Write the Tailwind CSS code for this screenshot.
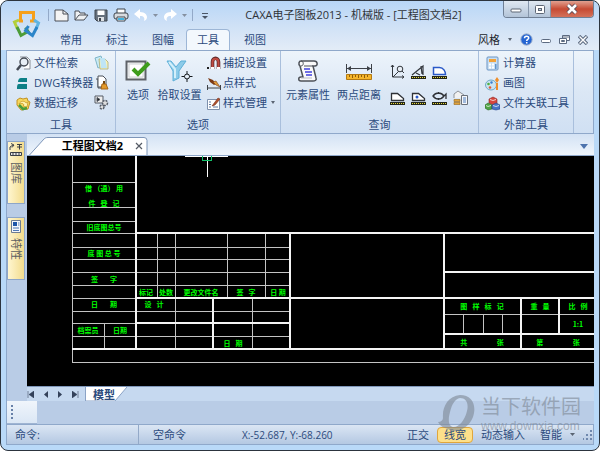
<!DOCTYPE html>
<html lang="zh-CN">
<head>
    <meta charset="UTF-8">
    <meta name="viewport" content="width=device-width, initial-scale=1.0">
    <title>CAXA电子图板2013 - 机械版</title>
    <script src="https://cdn.jsdelivr.net/npm/@tailwindcss/browser@4"></script>
</head>
<body class="bg-white font-['Open_Sans','Noto_Sans_CJK_SC',sans-serif] text-[11px] leading-4 text-[#2b4a7c]">
    <div class="relative h-screen flex flex-col overflow-hidden rounded-lg border border-[#2c343e] bg-[#b9d9f8] px-[5px] pb-[5px]">

        <!-- Title bar and tabs -->
        <header class="-mx-[5px] flex rounded-t-lg bg-linear-to-b from-[#b8d6f7] via-[#cfe1f6] to-[#e3ecf7] pl-[5px] pr-[5px]">
            <div class="w-[42px] pt-[9px] pl-[6px]">
                <svg class="h-[28px] w-[29px]" viewBox="0 0 29 28" fill="none" stroke-width="3">
                    <path d="M11 11H8.500V2.500h13V11H18" stroke="#f6a01c"/>
                    <path d="M7 10l-4.500 2 3 7" stroke="#b3cf3a"/>
                    <path d="M5 17l4 8.500 7-4-2.500-4" stroke="#4c9c38"/>
                    <path d="M22 10l4.500 3-2.500 6" stroke="#5fb4e2"/>
                    <path d="M25 17l-4.500 8.500-7-5 3-4.500" stroke="#2c85c9"/>
                </svg>
            </div>
            <div class="flex-1">
                <div class="flex h-7 items-start">
                    <div class="flex items-center gap-[5px] pt-[6px]">
                        <span class="h-3 w-px bg-[#93a9c8]"></span>
                        <button aria-label="新建"><svg class="h-4 w-[15px]" viewBox="0 0 15 16"><path d="M1 3h8l5 4v7H1z" fill="#f4f4f4" stroke="#4a4f57"/><path d="M9 3v4h5" fill="none" stroke="#4a4f57"/></svg></button>
                        <button aria-label="打开"><svg class="h-4 w-[15px]" viewBox="0 0 15 16" fill="#eef0f2" stroke="#4a4f57"><path d="M1 13V4h4l1 2h5v2"/><path d="M1 13l4-5h9l-4 5z"/></svg></button>
                        <button aria-label="保存"><svg class="h-4 w-[14px]" viewBox="0 0 14 16"><path d="M1 3h12v11H3l-2-2z" fill="#66707c" stroke="#3d444d"/><path d="M3.500 3.500h7V8h-7z" fill="#fff"/><path d="M4 10h6v4H4z" fill="#dde1e5"/><path d="M5 11h2v3H5z" fill="#3d444d"/></svg></button>
                        <button aria-label="打印"><svg class="h-4 w-4" viewBox="0 0 16 16"><path d="M4 2h8v5H4z" fill="#fff" stroke="#3d444d"/><rect x="1" y="6" width="14" height="6" rx="2" fill="#d8dbdf" stroke="#3d444d"/><path d="M4 10h8v4H4z" fill="#fff" stroke="#3d444d"/><path d="M5 11h6v2H5z" fill="#42b4e0"/></svg></button>
                        <button aria-label="撤销"><svg class="h-4 w-[14px]" viewBox="0 0 14 16"><path d="M0 7l6-5v3c5 0 7 3 7 5s-1 3-3 4c1-3 0-5-4-5v3z" fill="#fff"/></svg></button>
                        <button aria-label="撤销列表"><svg class="h-4 w-[5px]" viewBox="0 0 5 16"><path d="M0 7h5l-2.500 3z" fill="#8590a0"/></svg></button>
                        <button aria-label="重做"><svg class="h-4 w-[14px]" viewBox="0 0 14 16"><path d="M14 7L8 2v3C3 5 1 8 1 10s1 3 3 4c-1-3 0-5 4-5v3z" fill="#fff"/></svg></button>
                        <button aria-label="重做列表"><svg class="h-4 w-[5px]" viewBox="0 0 5 16"><path d="M0 7h5l-2.500 3z" fill="#8590a0"/></svg></button>
                        <span class="h-3 w-px bg-[#93a9c8]"></span>
                        <button class="pl-1" aria-label="自定义快速访问工具栏"><svg class="h-4 w-[6px]" viewBox="0 0 6 16"><path d="M0 6.500h6" stroke="#4a5566"/><path d="M0 9h6l-3 3z" fill="#4a5566"/></svg></button>
                    </div>
                    <h1 class="flex-1 whitespace-nowrap pt-[6px] pr-1 text-center text-[#2f3338]">CAXA电子图板2013 - 机械版 - [工程图文档2]</h1>
                    <div class="flex h-[17px] overflow-hidden rounded-b border border-t-0 border-[#6f7f94]">
                        <button class="flex w-[25px] items-center justify-center border-r border-[#8797ac] bg-linear-to-b from-[#dfe8f2] to-[#b3c4d8]" aria-label="最小化"><svg class="h-3 w-3" viewBox="0 0 12 12"><rect x="1" y="6" width="10" height="3" rx="1" fill="#fff" stroke="#5c6675"/></svg></button>
                        <button class="flex w-[22px] items-center justify-center border-r border-[#8797ac] bg-linear-to-b from-[#dfe8f2] to-[#b3c4d8]" aria-label="最大化"><svg class="h-3 w-3" viewBox="0 0 12 12"><rect x="1.500" y="2.500" width="9" height="8" rx="1" fill="#fff" stroke="#5c6675"/><rect x="4.500" y="5.500" width="3" height="2" fill="#c3d0df" stroke="#5c6675"/></svg></button>
                        <button class="flex w-[42px] items-center justify-center bg-linear-to-b from-[#e0a090] via-[#c64a33] to-[#d4715a]" aria-label="关闭"><svg class="h-3 w-3" viewBox="0 0 12 12"><path d="M2 2l8 8M10 2l-8 8" stroke="#5c4a55" stroke-width="4.500"/><path d="M2 2l8 8M10 2l-8 8" stroke="#fff" stroke-width="2.600"/></svg></button>
                    </div>
                </div>
                <div class="flex h-[21px] items-center">
                    <nav class="flex h-full">
                        <button class="w-[46px]">常用</button>
                        <button class="w-[46px]">标注</button>
                        <button class="w-[46px]">图幅</button>
                        <button class="w-[44px] rounded-t border border-b-0 border-[#9db6d6] bg-[#f3f8fd]">工具</button>
                        <button class="w-[50px]">视图</button>
                    </nav>
                    <div class="ml-auto flex items-center gap-2 pr-[6px]">
                        <button class="flex items-center gap-2 text-[#22262c]">风格<svg class="h-1 w-1" viewBox="0 0 4 4"><path d="M0 0h4L2 3z" fill="#5a6472"/></svg></button>
                        <button aria-label="帮助"><svg class="h-[13px] w-[13px]" viewBox="0 0 13 13"><circle cx="6.500" cy="6.500" r="5.700" fill="#2565d2" stroke="#a9b8cf"/><path d="M4.500 5.200c0-2.800 4.200-2.600 4.200-.3 0 1.500-2 1.500-2 3M6.700 9v1.500" stroke="#fff" stroke-width="1.500" fill="none"/></svg></button>
                        <button aria-label="最小化文档"><svg class="h-[10px] w-[10px]" viewBox="0 0 10 10"><rect x=".5" y="4.500" width="9" height="3" rx="1" fill="#fff" stroke="#5c6a80"/></svg></button>
                        <button aria-label="还原文档"><svg class="h-[11px] w-[11px]" viewBox="0 0 11 11" fill="#fff" stroke="#5c6a80"><path d="M3.500 1.500h7v5h-7z"/><path d="M3.500 3h7"/><path d="M.5 4.500h7v5h-7z"/><path d="M2.500 6.500h3v1h-3z"/></svg></button>
                        <button aria-label="关闭文档"><svg class="h-[10px] w-[10px]" viewBox="0 0 10 10"><path d="M1 1l8 8M9 1L1 9" stroke="#5c6a80" stroke-width="3.400"/><path d="M1.500 1.500l7 7M8.500 1.500l-7 7" stroke="#fff" stroke-width="1.400"/></svg></button>
                    </div>
                </div>
            </div>
        </header>

        <!-- Ribbon -->
        <div class="flex h-[84px] border border-[#8fa8ca] bg-linear-to-b from-[#edf4fb] via-[#dbe7f5] to-[#d0e0f3]">
            <section class="flex w-[109px] flex-col justify-between border-r border-[#a9bfdc] pt-1">
                <div class="flex justify-between pl-[9px] pr-[6px]">
                    <div class="flex flex-col gap-1">
                        <button class="flex items-center gap-[3px] whitespace-nowrap"><svg class="h-[15px] w-[15px]" viewBox="0 0 15 15"><path d="M4 1h7l3 3v9H8" fill="#fff" stroke="#8a8f98"/><circle cx="8" cy="6" r="4" fill="#e8eef5" stroke="#444a54" stroke-width="1.400"/><path d="M5 9l-4 5" stroke="#444a54" stroke-width="2.500"/></svg>文件检索</button>
                        <button class="flex items-center gap-[3px] whitespace-nowrap"><svg class="h-[15px] w-[15px]" viewBox="0 0 15 15" fill="#0d7f86"><path d="M5 2h6v4H2c0-2 1-4 3-4zM3 8h8v5H1c0-3 0-5 2-5z"/></svg>DWG转换器</button>
                        <button class="flex items-center gap-[3px] whitespace-nowrap"><svg class="h-[15px] w-[15px]" viewBox="0 0 15 15"><path d="M1 4l3-2 3 1 4-1 1 3 2 1-2 7-7 1-4-5z" fill="#f7d75c" stroke="#c39222"/><path d="M3 8c2-4 6-3 7-1l2-1-1 5-4-1 1-1c-1-2-2-2-5-1z" fill="#fff3b0" stroke="#c39222" stroke-width=".7"/><path d="M3 9l4 4 4-1" fill="none" stroke="#4b9d3a" stroke-width="2.500"/></svg>数据迁移</button>
                    </div>
                    <div class="flex flex-col items-center gap-[5px]">
                        <button aria-label="文档"><svg class="h-[15px] w-[15px]" viewBox="0 0 15 15"><path d="M1 3l6-2 3 9-6 3z" fill="#c9ebf5" stroke="#7fb5c9"/><path d="M5 4h6l3 3v7H6z" fill="#fbf3b5" stroke="#b5b98b"/><path d="M6 3h5l2 10H7z" fill="#bfe5f5"/></svg></button>
                        <button aria-label="清理"><svg class="h-[15px] w-[15px]" viewBox="0 0 15 15"><path d="M2 4h2v9h5" fill="none" stroke="#4b5059"/><path d="M4 1h5l3 3v8H4z" fill="#fff" stroke="#4b5059"/><path d="M10 6v3" stroke="#70450f" stroke-width="2"/><path d="M8 9h4l2 5H7z" fill="#e39a2b" stroke="#a7671a"/></svg></button>
                        <button aria-label="批处理"><svg class="h-[15px] w-[15px]" viewBox="0 0 15 15" fill="none" stroke="#555b65"><path d="M1 1h8v7H1z" fill="#eee"/><path d="M3 2.500l3 2-3 2z" fill="#222"/><circle cx="11" cy="8" r="2.500" fill="#ddd" stroke-dasharray="2 1" stroke-width="1.500"/><circle cx="8" cy="12" r="2" fill="#ddd" stroke-dasharray="2 1" stroke-width="1.500"/></svg></button>
                    </div>
                </div>
                <h2 class="text-center">工具</h2>
            </section>

            <section class="flex w-[165px] flex-col justify-between border-r border-[#a9bfdc] pt-1">
                <div class="flex pl-[7px]">
                    <button class="flex w-[30px] flex-col items-center gap-1 pt-1"><svg class="h-6 w-[26px]" viewBox="0 0 26 24"><path d="M1.500 2.500h19v18h-19z" fill="#f2f3f3" stroke="#5e6268" stroke-width="2"/><path d="M4 5h14v13H4z" fill="#fff" stroke="#d0d3d6"/><path d="M8 10l5 5L24 4" fill="none" stroke="#3f9d1c" stroke-width="4"/></svg>选项</button>
                    <button class="flex w-[53px] flex-col items-center gap-1 pt-1 whitespace-nowrap"><svg class="h-6 w-7" viewBox="0 0 28 24"><path d="M1 2h4l5 6 5-6h5l-7 10v7l-6 3V12z" fill="#8ccbe9" stroke="#5fb0d8"/><path d="M3 3l6 7v9" fill="none" stroke="#d3effa" stroke-width="2"/><path d="M21 12v11M15.500 17.500h11" stroke="#15181c"/><circle cx="21" cy="17.500" r="2.500" fill="#e4edf7" stroke="#15181c"/></svg>拾取设置</button>
                    <div class="flex flex-col gap-1 pl-[1px]">
                        <button class="flex items-center gap-[2px] whitespace-nowrap"><svg class="h-[15px] w-[14px]" viewBox="0 0 14 15"><path d="M5.500 13V6c0-5 6-5 6 0v7" fill="none" stroke="#5d2b2b" stroke-width="3.600"/><path d="M5.500 12V6c0-4.500 6-4.500 6 0v6" fill="none" stroke="#c04b42" stroke-width="2"/><path d="M4 11h3v2H4zM10 11h3v2h-3z" fill="#fff"/><path d="M0 11h2v2H0z" fill="#222"/></svg>捕捉设置</button>
                        <button class="flex items-center gap-[2px] whitespace-nowrap"><svg class="h-[15px] w-[14px]" viewBox="0 0 14 15"><path d="M.5 9v5M13.500 9v5M1 12h12" stroke="#3e4248"/><path d="M1 2l5 2 3 4-2 1-4-3z" fill="#7b3a16"/><path d="M6 6l3-1 4 6-4-2z" fill="#e09a3a" stroke="#7b3a16" stroke-width=".6"/></svg>点样式</button>
                        <button class="flex items-center gap-[2px] whitespace-nowrap"><svg class="h-[15px] w-[14px]" viewBox="0 0 14 15"><path d="M.5 3.500h12v10H.5z" fill="#fff" stroke="#7e90ac"/><path d="M2 6h2M2 8.500h2M2 11h2M6 11h5" stroke="#5f78a0"/><path d="M5 10l6-8 2 1-5 6z" fill="#b3502c" stroke="#70301c" stroke-width=".6"/></svg>样式管理<svg class="ml-[2px] h-1 w-1" viewBox="0 0 4 4"><path d="M0 0h4L2 3z" fill="#5a6472"/></svg></button>
                    </div>
                </div>
                <h2 class="text-center">选项</h2>
            </section>

            <section class="flex w-[198px] flex-col justify-between border-r border-[#a9bfdc] pt-1">
                <div class="flex pl-[2px]">
                    <button class="flex w-[50px] flex-col items-center gap-1 pt-1 whitespace-nowrap"><svg class="h-6 w-6" viewBox="0 0 24 24"><path d="M5 2h13c4 0 4 5 1 5h-2l3 12c1 2-1 3-3 3H5c-3 0-3-4 0-4h2L4 7C2 5 3 2 5 2z" fill="#fafafa" stroke="#4d5158" stroke-width="1.500"/><path d="M5 2c3 0 3 5 0 5M17 7H8" fill="none" stroke="#4d5158"/><path d="M8 10h6M9 13h7M10 16h6" stroke="#4343dd" stroke-width="1.300"/><path d="M5 19h11" stroke="#b9bdc4"/></svg>元素属性</button>
                    <button class="flex w-[52px] flex-col items-center gap-1 pt-1 whitespace-nowrap"><svg class="h-6 w-7" viewBox="0 0 28 24"><path d="M1.500 5v9M26.500 5v9M2 9.500h24" stroke="#3d4147"/><path d="M6 7L2 9.500 6 12zM22 7l4 2.500-4 2.500z" fill="#3d4147"/><path d="M1.500 15.500h25v5h-25z" fill="#f5b52b" stroke="#b47a12"/><path d="M4.500 16v2M7.500 16v3M10.500 16v2M13.500 16v3M16.500 16v2M19.500 16v3M22.500 16v2" stroke="#8f5c08"/></svg>两点距离</button>
                    <div class="grid grid-cols-4 content-start gap-x-[6px] gap-y-[10px] pt-[9px] pl-[5px]">
                        <button aria-label="坐标点"><svg class="h-4 w-[15px]" viewBox="0 0 15 16" fill="none" stroke="#33373d"><path d="M2.500 1v12H14M1 3l1.500-2L4 3M12 11.500l2 1.500-2 1.500M3 13l6-6"/><circle cx="10" cy="5" r="2.800" fill="#e8eef5"/><path d="M12 7l2 2"/></svg></button>
                        <button aria-label="角度"><svg class="h-4 w-[15px]" viewBox="0 0 15 16"><path d="M1 11L12 2v9M5 9l4 2M10 2l1 8" fill="none" stroke="#33373d" stroke-width="1.200"/><path d="M0 12h15v3H0z" fill="#24261a"/><path d="M1 13.500h13" stroke="#e8dc3c" stroke-dasharray="1 1"/></svg></button>
                        <button aria-label="周长"><svg class="h-4 w-[15px]" viewBox="0 0 15 16"><path d="M1.500 3.500h6c4 0 6 4 6 7h-12z" fill="#fff" stroke="#2a59c8" stroke-width="1.500"/><path d="M0 12h15v3H0z" fill="#24261a"/><path d="M1 13.500h13" stroke="#e8dc3c" stroke-dasharray="1 1"/></svg></button>
                        <span></span>
                        <button aria-label="面积"><svg class="h-4 w-[15px]" viewBox="0 0 15 16"><path d="M1.500 3.500h6l6 5v2h-12z" fill="#fff" stroke="#2e3136" stroke-width="1.300"/><path d="M0 12h15v3H0z" fill="#24261a"/><path d="M1 13.500h13" stroke="#e8dc3c" stroke-dasharray="1 1"/></svg></button>
                        <button aria-label="重心"><svg class="h-4 w-[15px]" viewBox="0 0 15 16"><path d="M1.500 3.500h6l6 5v2h-12z" fill="#fff" stroke="#2e3136" stroke-width="1.300"/><circle cx="6" cy="7" r="1.500" fill="#2a59c8"/><path d="M0 12h15v3H0z" fill="#24261a"/><path d="M1 13.500h13" stroke="#e8dc3c" stroke-dasharray="1 1"/></svg></button>
                        <button aria-label="惯性矩"><svg class="h-4 w-[15px]" viewBox="0 0 15 16"><path d="M1 6c3-4 8-4 11 0-3 4-8 4-11 0zM6.500 2v2M6.500 8v2M11 7l3-3v5" fill="none" stroke="#2e3136" stroke-width="1.300"/><path d="M0 12h15v3H0z" fill="#24261a"/><path d="M1 13.500h13" stroke="#e8dc3c" stroke-dasharray="1 1"/></svg></button>
                        <button aria-label="重量"><svg class="h-4 w-[15px]" viewBox="0 0 15 16"><path d="M1 8V4l4-3 6 4v3" fill="#f1f1f1" stroke="#8d9299"/><path d="M1 9.500h6v2H1zM1 12.500h6v2H1z" fill="#e2a33b" stroke="#976516" stroke-width=".6"/><path d="M8.500 5.500h6v9h-6z" fill="#f5f7fa" stroke="#6a707a"/><path d="M10 8h3M10 10h3M10 12h3" stroke="#4f7fc0"/></svg></button>
                    </div>
                </div>
                <h2 class="text-center">查询</h2>
            </section>

            <section class="flex w-[95px] flex-col justify-between border-r border-[#a9bfdc] pt-1">
                <div class="flex flex-col items-start gap-1 pl-[6px]">
                    <button class="flex items-center gap-[3px] whitespace-nowrap"><svg class="h-[15px] w-[15px]" viewBox="0 0 15 15"><rect x="2" y="1" width="11" height="13" rx="1" fill="#c9def2" stroke="#6b95c4"/><path d="M4 3h7v3H4z" fill="#f2a33a"/><path d="M4 8.500h2M7 8.500h2M4 11.500h2M7 11.500h2" stroke="#fff" stroke-width="2"/><path d="M10 8h1.500v5H10z" fill="#5d93cf"/></svg>计算器</button>
                    <button class="flex items-center gap-[3px] whitespace-nowrap"><svg class="h-[15px] w-[15px]" viewBox="0 0 15 15"><ellipse cx="6" cy="9" rx="5.500" ry="5" fill="#cbe4f2" stroke="#6fa9c8"/><circle cx="3.500" cy="8" r="1.300" fill="#4caf3e"/><circle cx="6.500" cy="6.500" r="1.200" fill="#3b7fd0"/><circle cx="5" cy="11.500" r="1.300" fill="#e05b3a"/><path d="M12 1l2 3-2 3-2-3zM11 7h2v7h-2z" fill="#ef8e2a"/></svg>画图</button>
                    <button class="flex items-center gap-[3px] whitespace-nowrap"><svg class="h-[15px] w-[15px]" viewBox="0 0 15 15"><path d="M4 3l4-2 4 2v5L8 9 4 7z" fill="#d6453c" stroke="#8c2622" stroke-width=".6"/><path d="M0 9l3-2 4 2v4l-4 1-3-2z" fill="#4ea345" stroke="#286326" stroke-width=".6"/><path d="M7 9l4-2 4 2v4l-4 1-4-1z" fill="#4774c6" stroke="#24448a" stroke-width=".6"/><path d="M5 3.500l3 1 3-1M1 9.500l2 1 3-1M8 9.500l3 1 3-1" fill="none" stroke="#fff" stroke-opacity=".7"/></svg>文件关联工具</button>
                </div>
                <h2 class="text-center">外部工具</h2>
            </section>
        </div>

        <!-- Drawing area -->
        <div class="flex min-h-0 flex-1 bg-[#b9cce6]">
            <aside class="flex w-[21px] flex-col gap-[13px] border-l border-[#8fa8ca] pt-[7px] pr-[2px]">
                <button class="flex h-[63px] flex-col items-center gap-[5px] border border-[#8ea6c8] bg-linear-to-r from-[#fff6d0] to-[#f3dc8c] pt-[1px] text-[#5d5f63]">
                    <svg class="h-[14px] w-[14px] shrink-0" viewBox="0 0 14 14" fill="none" stroke="#3a3f47"><path d="M1 7V4l3-2M2 .5L5 2 3 4.500M8 1.500h5M10.500 1.500v5M8 4h5"/><path d="M1.500 9.500h11v3h-11z" fill="#e8e8e8"/><path d="M4 9v3M7 9v3M10 9v3"/></svg>
                    <span class="[writing-mode:vertical-rl] [text-orientation:sideways]">图库</span>
                </button>
                <button class="flex h-[63px] flex-col items-center gap-[5px] border border-[#8ea6c8] bg-linear-to-r from-[#fff6d0] to-[#f3dc8c] pt-[1px] text-[#5d5f63]">
                    <svg class="h-[14px] w-[14px] shrink-0" viewBox="0 0 14 14"><path d="M2.500 1.500h9v12h-9z" fill="#f5f7fa" stroke="#6d7c93"/><path d="M4 3h4v4H4z" fill="#1f56a8"/><path d="M9 4h1.500M9 6h1.500M4 9h6M4 11.500h6" stroke="#4f79b5"/></svg>
                    <span class="[writing-mode:vertical-rl] [text-orientation:sideways]">特性</span>
                </button>
            </aside>
            <div class="flex min-w-0 flex-1 flex-col">
                <div class="flex h-[22px] items-end border-b border-[#8fa8ca] bg-linear-to-b from-[#d3e2f4] to-[#eff5fc] pl-[2px]">
                    <div class="relative flex h-[18px] w-[119px] items-center justify-end gap-3 pr-[5px]">
                        <svg class="absolute inset-0 h-full w-full" viewBox="0 0 119 18"><path d="M.5 18L15 2c1-1 2-1.500 4-1.500h96q3 0 3 3V18" fill="#fff" stroke="#7d95b8"/></svg>
                        <span class="relative font-bold text-black">工程图文档2</span>
                        <button class="relative" aria-label="关闭标签"><svg class="h-2 w-2" viewBox="0 0 8 8"><path d="M1 1l6 6M7 1L1 7" stroke="#555b65" stroke-width="1.200"/></svg></button>
                    </div>
                    <button class="mr-[6px] mb-[6px] ml-auto" aria-label="文档列表"><svg class="h-[5px] w-2" viewBox="0 0 8 5"><path d="M0 0h8L4 5z" fill="#4d73ad"/></svg></button>
                </div>
                <div class="min-h-0 flex-1 bg-black">
                    <svg class="h-full w-full font-['Noto_Sans_CJK_SC',sans-serif] text-[7px]" stroke="#c4c4c4" fill="none" shape-rendering="crispEdges">
                        <!-- side column -->
                        <path d="M45.500 0V206.500H600M77.500 167V193M45 26.500H109M45 51.500H109M45 65.500H109M45 77.500H109M45 91.500H109M45 103.500H109M45 116.500H109M45 129.500H109M45 142.500H109M45 155.500H109M45 167.500H109M45 180.500H109"/>
                        <!-- change table -->
                        <path d="M130.500 77V142M148.500 77V193M200.500 77V142M238.500 77V142M225.500 142V193M109 91.500H263M109 103.500H263M109 116.500H263M109 129.500H263M109 155.500H263M109 180.500H263"/>
                        <!-- title block -->
                        <path d="M436.500 158V178M456.500 158V178M475.500 158V178M417 158.500H600"/>
                        <path d="M109 0V193M109 77H600M263 77V193M186 142V193M45 193H600M109 142H600M109 167H263M417 77V193M417 116H600M417 178H600M494 142V193M532 142V178" stroke="#f4f4f4" stroke-width="2"/>
                        <!-- crosshair -->
                        <path d="M158 .5H201M180.500 0V21" stroke="#fff"/>
                        <path d="M175.500 0V4.500H184.500V0" stroke="#14c26a"/>
                        <g fill="#00ff00" stroke="none" text-anchor="middle" shape-rendering="auto" class="font-bold">
                            <text x="77" y="35">借 （通） 用</text>
                            <text x="77" y="50">件 &#8194;登 &#8194;记</text>
                            <text x="77" y="74">旧底图总号</text>
                            <text x="77" y="100">底 图 总 号</text>
                            <text x="77" y="126">签 &#8195;&#8194;字</text>
                            <text x="77" y="151">日 &#8195;&#8194;期</text>
                            <text x="61" y="177">档案员</text>
                            <text x="93" y="177">日期</text>
                            <text x="119" y="139">标记</text>
                            <text x="139" y="139">处数</text>
                            <text x="174" y="139">更改文件名</text>
                            <text x="219" y="139">签 &#8194;字</text>
                            <text x="251" y="139">日 期</text>
                            <text x="127" y="151">设 &#8194;计</text>
                            <text x="206" y="190">日 &#8194;期</text>
                            <text x="455" y="153">图 &#8194;样 &#8194;标 &#8194;记</text>
                            <text x="513" y="153">重 &#8194;量</text>
                            <text x="551" y="153">比 &#8194;例</text>
                            <text x="551" y="171">1:1</text>
                            <text x="455" y="189">共 &#8195;&#8195;&#8195;&#8195;张</text>
                            <text x="531" y="189">第 &#8195;&#8195;&#8195;&#8195;张</text>
                        </g>
                    </svg>
                </div>
                <div class="flex h-[15px] items-center border-t border-[#7f97ba] bg-[#c6d9f0]">
                    <div class="flex gap-2 pr-[6px]">
                        <button aria-label="第一页"><svg class="h-[7px] w-[7px]" viewBox="0 0 7 7"><path d="M1 0v7M7 0L2 3.500 7 7z" fill="#33415a" stroke="#33415a" stroke-width=".6"/></svg></button>
                        <button aria-label="上一页"><svg class="h-[7px] w-[7px]" viewBox="0 0 7 7"><path d="M6 0L2 3.500 6 7z" fill="#33415a"/></svg></button>
                        <button aria-label="下一页"><svg class="h-[7px] w-[7px]" viewBox="0 0 7 7"><path d="M1 0l4 3.500L1 7z" fill="#33415a"/></svg></button>
                        <button aria-label="最后一页"><svg class="h-[7px] w-[7px]" viewBox="0 0 7 7"><path d="M6 0v7M0 0l5 3.500L0 7z" fill="#33415a" stroke="#33415a" stroke-width=".6"/></svg></button>
                    </div>
                    <button class="relative h-full w-[42px] pl-2 text-left font-bold">
                        <svg class="absolute inset-0 h-full w-full" viewBox="0 0 42 14" preserveAspectRatio="none"><path d="M.5 0v14H30L42 0" fill="#fff" stroke="#8ba3c6"/></svg>
                        <span class="relative">模型</span>
                    </button>
                </div>
            </div>
        </div>

        <!-- Command strip -->
        <div class="h-[23px] border-l border-[#8fa8ca] bg-[#b9cce6]">
            <div class="flex h-full w-[30px] items-center border-b border-[#9fb4d2] bg-linear-to-b from-[#f0f5fb] to-[#dbe7f5] pl-1">
                <svg class="h-[14px] w-[2px]" viewBox="0 0 2 14" fill="#6780a8"><path d="M0 0h2v2H0zM0 4h2v2H0zM0 8h2v2H0zM0 12h2v2H0z"/></svg>
            </div>
        </div>

        <!-- Status bar -->
        <footer class="flex h-[21px] items-center border border-[#8fa8ca] bg-linear-to-b from-[#dbe6f4] to-[#b4c8e2] whitespace-nowrap">
            <label for="command" class="pl-2">命令:</label>
            <input id="command" type="text" class="h-4 w-[98px] bg-transparent px-1 outline-none">
            <span class="h-full border-l border-[#93a9c8]"></span>
            <span class="w-[103px] pl-[14px]">空命令</span>
            <span class="text-[10px]">X:-52.687, Y:-68.260</span>
            <div class="ml-auto flex items-center gap-2">
                <button>正交</button>
                <button class="h-4 rounded-sm border border-[#e0a63c] bg-[#fde08a] px-[6px] leading-[14px]">线宽</button>
                <button>动态输入</button>
                <button class="flex items-center gap-2 pl-[7px]">智能<svg class="h-1 w-[5px]" viewBox="0 0 5 4"><path d="M0 0h5L2.500 3z" fill="#5a6472"/></svg></button>
                <svg class="h-3 w-[10px]" viewBox="0 0 10 12" fill="#6f88ae"><path d="M7 1h2v2H7zM7 5h2v2H7zM7 9h2v2H7zM3 5h2v2H3zM3 9h2v2H3zM0 9h1v2H0z"/></svg>
            </div>
        </footer>

        <!-- Watermark -->
        <div class="pointer-events-none absolute right-[18px] bottom-[16px] flex items-start gap-[5px] text-[#7d8794]/60">
            <svg class="h-[39px] w-[38px]" viewBox="0 0 38 39"><path d="M22 0C10 1 4 12 5 23c0 2-2 4-5 4 2 4 6 6 10 7 6 5 20 1 25-12C39 10 34 0 22 0zm0 3c6 0 9 5 7 13-2 9-8 16-13 16-6 0-6-8-4-15 2-8 5-13 10-14z" fill="currentColor" fill-rule="evenodd"/></svg>
            <div>
                <p class="text-[20px] leading-[24px]">当下软件园</p>
                <p class="font-['Liberation_Sans',sans-serif] text-[12px] leading-[14px]">www.downxia.com</p>
            </div>
        </div>
    </div>
</body>
</html>
